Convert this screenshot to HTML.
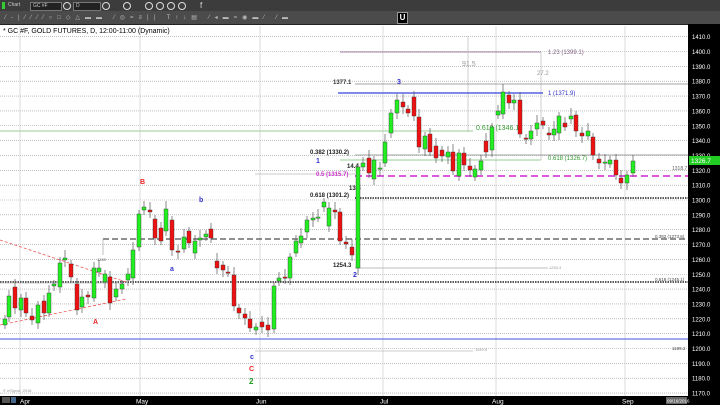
<!DOCTYPE html>
<html><head><meta charset="utf-8"><style>
*{margin:0;padding:0}
body{width:720px;height:405px;overflow:hidden;background:#fff;font-family:"Liberation Sans",sans-serif;position:relative}
#tb1{position:absolute;left:0;top:0;width:720px;height:11px;background:#3c3c3c}
#tb2{position:absolute;left:0;top:11px;width:720px;height:13px;background:#4b4b4b;border-bottom:1px solid #222}
.box{position:absolute;top:2px;height:7px;background:#222;border:1px solid #777;color:#ccc;font-size:5px;line-height:7px;padding-left:2px}
.ic{position:absolute;width:6px;height:6px;border:1px solid #ddd;border-radius:50%}
.t2{position:absolute;top:4px;color:#bbb;font-size:6px;line-height:6px}
svg{position:absolute;left:0;top:0}
</style></head><body>
<div id="tb1">
<div style="position:absolute;left:2px;top:2px;width:3px;height:7px;background:#3c3"></div>
<div style="position:absolute;left:8px;top:2px;color:#ccc;font-size:5px">Chart</div>
<div class="box" style="left:30px;width:28px">GC #F</div>
<div class="ic" style="left:63px;top:2px"></div>
<div class="box" style="left:73px;width:24px">D</div>
<div class="ic" style="left:102px;top:2px"></div>
<div class="ic" style="left:123px;top:2px"></div>
<div class="ic" style="left:145px;top:2px"></div>
<div class="ic" style="left:156px;top:2px"></div>
<div class="ic" style="left:167px;top:2px"></div>
<div class="ic" style="left:178px;top:2px"></div>
<div style="position:absolute;left:200px;top:1px;color:#ddd;font-size:8px">f</div>
</div>
<div id="tb2">
<div class="t2" style="left:5px;letter-spacing:5px">⁄‐|⁄⁄⁄⁄○□◇△▬▬ ⁄◎=≡|| T↑↓▤ ⁄◂▬=◉▬⁄ ⁄▬</div>
<div style="position:absolute;left:397px;top:1px;width:9px;height:10px;background:#000;border:1px solid #999;color:#fff;font-size:8px;line-height:10px;text-align:center;font-weight:bold">U</div>
</div>
<svg id="c" width="720" height="405" viewBox="0 0 720 405" font-family="Liberation Sans, sans-serif"></svg>
<script>
var s='',Y=function(p){return 200+(1300-p)*1.485};
for(var p=1170;p<=1410;p+=10){var y=Y(p);if(y<26)continue;s+='<line x1="0" y1="'+y+'" x2="688" y2="'+y+'" stroke="#999" stroke-width="0.6" stroke-dasharray="1,1"/>';}
[20,140,260,383,496,625].forEach(function(x){s+='<line x1="'+x+'" y1="26" x2="'+x+'" y2="396" stroke="#ccc" stroke-width="0.7"/>'});
function L(x1,y1,x2,y2,c,w,d){s+='<line x1="'+x1+'" y1="'+y1+'" x2="'+x2+'" y2="'+y2+'" stroke="'+c+'" stroke-width="'+w+'"'+(d?' stroke-dasharray="'+d+'"':'')+'/>'}
function T(x,y,t,c,f,b){s+='<text x="'+x+'" y="'+y+'" font-size="'+f+'" fill="'+c+'"'+(b?' font-weight="bold"':'')+'>'+t+'</text>'}
L(340,52,541,52,'#a080a0',1);T(548,54,'1.23 (1399.1)','#806080',6);
L(468,36,468,132,'#bbb',0.7);L(541,52,541,160,'#bbb',0.7);
T(462,66,'91.5','#999',7);T(537,75,'27.2','#999',6);
L(355,84,688,84,'#888',0.8);T(333,84,'1377.1','#333',6,1);T(397,84,'3','#33c',7,1);
L(338,93,543,93,'#3344dd',1.2);T(548,95,'1 (1371.9)','#33c',6);
L(0,131,473,131,'#9c9',1);T(476,130,'0.618 (1346.1)','#393',7);
L(355,155,688,155,'#888',0.8);T(310,154,'0.382 (1330.2)','#222',6,1);T(316,163,'1','#33c',7,1);
L(340,160,541,160,'#9c9',1);T(548,160,'0.618 (1326.7)','#393',6);
L(255,174,355,174,'#bbb',0.7);
L(355,176,688,176,'#d020d0',1.6,'7,4');T(316,176,'0.5 (1315.7)','#c3c',6,1);
T(672,170,'1318.7','#666',5);T(347,168,'14.4','#222',6,1);T(349,190,'13.5','#222',6,1);
L(355,198,688,198,'#222',1.4,'1.5,1');T(310,197,'0.618 (1301.2)','#222',6,1);
L(103,239,688,239,'#222',0.9,'6,3');L(103,239,103,255,'#999',0.6);T(655,238,'0.382 (1273.6)','#444',4.5);T(97,261,'1283','#666',4);
L(355,268,548,268,'#aaa',0.7);T(549,269,'1253.4','#999',4);T(333,267,'1254.3','#222',6,1);T(353,277,'2','#33c',7,1);
L(0,282,688,282,'#222',1.4,'1.5,1');T(655,281,'0.618 (1245.1)','#444',4.5);
L(0,283,125,283,'#bbb',0.7);
L(0,339,688,339,'#4455dd',1);
L(255,351,473,351,'#bbb',0.7);T(475,351,'1199.5','#999',4);T(672,350,'1199.2','#444',4.5);
L(0,240,126,282,'#e55',0.8,'3,2');L(0,325,126,299,'#e55',0.8,'3,2');
T(140,184,'B','#e22',7,1);T(93,324,'A','#e22',7,1);T(199,202,'b','#33c',7,1);T(170,271,'a','#33c',7,1);
T(250,359,'c','#33c',7,1);T(249,371,'C','#e22',7,1);T(249,384,'2','#292',8,1);
var d=[[3,319,325,1],[7,296,317,1],[13,287,308,0],[19,298,310,1],[24,298,313,0],[30,316,320,0],[36,305,323,1],[42,301,313,0],[47,293,313,1],[52,284,286,1],[58,263,287,1],[63,258,260,1],[69,264,277,0],[75,284,310,0],[80,297,307,1],[86,295,297,0],[92,268,298,1],[97,268,272,1],[103,274,282,1],[108,277,303,0],[114,289,297,1],[120,284,289,1],[126,274,280,1],[131,250,278,1],[137,214,247,1],[142,207,210,1],[148,210,212,0],[153,219,238,0],[159,228,241,0],[164,209,231,1],[170,220,250,0],[176,251,252,0],[182,237,249,1],[187,231,243,0],[193,241,253,1],[198,238,240,1],[204,234,237,1],[209,229,238,0],[215,261,268,0],[221,265,270,0],[226,272,273,0],[232,275,306,0],[237,308,313,0],[243,314,318,0],[248,319,328,0],[254,327,330,1],[260,322,327,0],[266,325,330,0],[272,286,329,1],[277,278,281,1],[283,277,278,0],[288,257,278,1],[294,241,253,1],[299,236,243,1],[305,220,232,1],[311,218,220,1],[316,217,218,1],[322,202,207,1],[327,208,226,1],[333,210,212,0],[338,212,241,0],[344,242,244,0],[350,247,255,0],[356,167,268,1],[361,163,167,1],[367,158,173,0],[372,160,179,1],[378,168,169,1],[383,142,163,1],[389,113,133,1],[395,100,113,1],[401,102,107,0],[406,109,113,0],[412,97,116,0],[417,117,147,0],[423,136,149,1],[428,134,152,0],[434,146,158,0],[440,150,156,0],[446,152,157,1],[451,152,171,0],[457,153,176,1],[462,153,165,0],[468,166,170,0],[473,169,177,1],[479,161,170,1],[484,141,152,0],[490,127,150,1],[496,111,115,1],[501,92,114,1],[507,95,103,0],[512,100,103,1],[518,100,134,0],[524,138,139,0],[529,131,139,1],[535,123,129,1],[541,121,125,0],[547,133,135,0],[552,129,135,1],[557,116,133,1],[563,123,127,0],[569,116,119,1],[574,115,131,0],[580,133,136,0],[586,131,136,1],[591,137,155,0],[597,159,163,0],[603,162,163,1],[608,160,164,1],[614,160,175,0],[619,178,183,0],[625,175,183,1],[631,161,173,1]];
d.forEach(function(c,i){var x=c[0],h=c[1]-4-(i%3)*2,l=c[2]+4+(i%4);
s+='<line x1="'+(x+2)+'" y1="'+h+'" x2="'+(x+2)+'" y2="'+l+'" stroke="#555" stroke-width="0.7"/>';
s+='<rect x="'+x+'" y="'+c[1]+'" width="4" height="'+Math.max(1.2,c[2]-c[1])+'" fill="'+(c[3]?'#22ee22':'#ee1111')+'" stroke="#333" stroke-width="0.4"/>';});
s+='<rect x="688" y="24" width="32" height="381" fill="#000"/>';
for(var p=1170;p<=1410;p+=10){var y=Y(p);if(y<30)continue;s+='<text x="692" y="'+(y+2.5)+'" font-size="6" fill="#fff">'+p+'.0</text>';}
s+='<rect x="689" y="156" width="31" height="9" fill="#22cc22"/><text x="691" y="163" font-size="6.5" fill="#fff">1326.7</text>';
s+='<rect x="0" y="396" width="720" height="9" fill="#000"/>';
s+='<rect x="2" y="397" width="8" height="6" fill="#555"/><rect x="11" y="397" width="5" height="6" fill="#468"/>';
[['Apr',20],['May',136],['Jun',256],['Jul',380],['Aug',492],['Sep',622]].forEach(function(m){s+='<text x="'+m[1]+'" y="403.5" font-size="6.5" fill="#fff">'+m[0]+'</text>'});
s+='<rect x="666" y="397" width="21" height="7" fill="#666"/><text x="667" y="402.5" font-size="4.5" fill="#fff">09/16/2016</text>';
s+='<text x="3" y="392" font-size="4" fill="#999">© eSignal, 2016</text>';
s+='<text x="3" y="33" font-size="7" fill="#000">* GC #F, GOLD FUTURES, D, 12:00-11:00 (Dynamic)</text>';
document.getElementById('c').innerHTML=s;
</script>
</body></html>
